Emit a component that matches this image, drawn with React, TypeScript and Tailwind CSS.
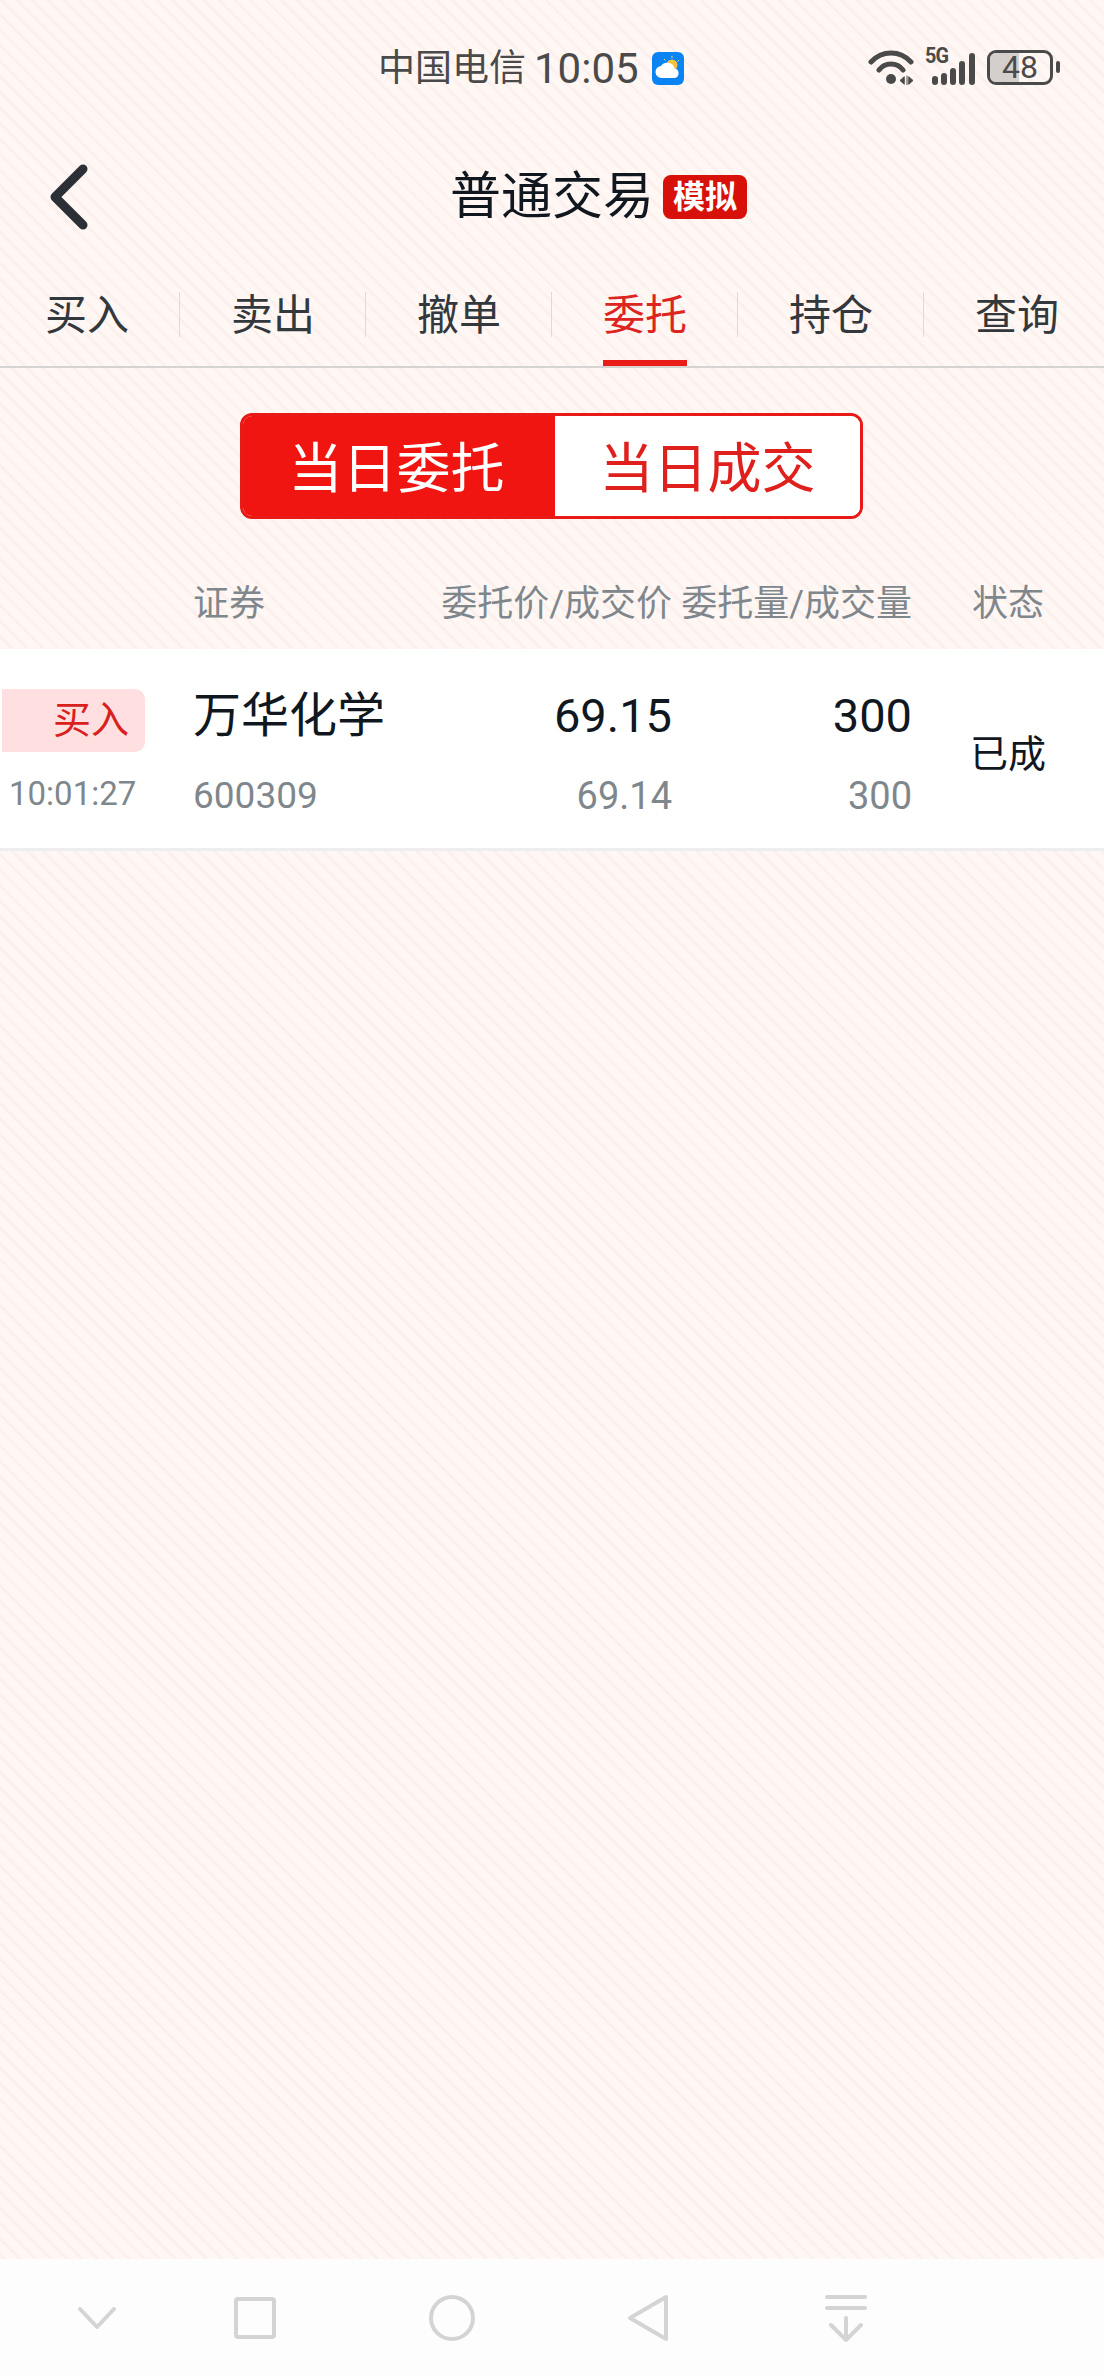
const tabs = ["买入", "卖出", "撤单", "委托", "持仓", "查询"];

const Wifi = () => (
  <svg width="46" height="36" viewBox="0 0 46 36" fill="none" stroke="#4a4a4a" strokeLinecap="round">
    <path d="M3 13C14 1 32 1 43 13" strokeWidth="5" />
    <path d="M11 21C17 13 29 13 35 21" strokeWidth="5" />
    <circle cx="23" cy="30" r="5" fill="#4a4a4a" stroke="none" />
    <path d="M36 28l-4 3.500 4 3.500zM39 27v9M41 28l4 3.500-4 3.500z" fill="#4a4a4a" strokeWidth="1" />
  </svg>
);

const Signal = () => (
  <svg width="50" height="34" viewBox="0 0 50 34" fill="none" stroke="#4a4a4a" strokeWidth="6" strokeLinecap="round">
    <path d="M10 28v3M19 25v6M28 20v11M37 13v18M47 5v26" />
  </svg>
);

const Weather = () => (
  <svg width="32" height="33" viewBox="0 0 32 33">
    <rect width="32" height="33" rx="6" fill="#0b84f3" />
    <circle cx="20" cy="13" r="5.500" fill="#f7c23c" />
    <path d="M20 4v2M27 8l-1.500 1.500M12 7l1.500 1.500" stroke="#f7d97c" strokeWidth="1" />
    <path d="M10 26a6 6 0 0 1-1-12 7.500 7.500 0 0 1 13.500 2.500 4.800 4.800 0 0 1 0 9.500z" fill="#fff" />
  </svg>
);

const Back = () => (
  <svg width="40" height="70" viewBox="0 0 40 70" fill="none" stroke="#2b3036" strokeWidth="9" strokeLinecap="round" strokeLinejoin="round">
    <path d="M33 7 L5 35 L33 63" />
  </svg>
);

export default function App() {
  return (
    <div className="relative h-[2376px] w-[1104px] overflow-hidden flex flex-col bg-[#fff7f4] bg-[repeating-linear-gradient(45deg,#fff7f4_0px,#fff7f4_7px,#fbefec_8.500px,#fbefec_9.500px,#fff7f4_11px)] font-['Roboto','Noto_Sans_CJK_SC',sans-serif]">
      {/* status bar */}
      <div className="h-[134px] shrink-0 flex items-center pl-[378px] pr-[44px] text-[#4a4a4a]">
        <span className="pt-[3px] text-[37px] leading-[40px]">中国电信</span>
        <span className="ml-[8px] pt-[3px] text-[42px] leading-[40px]">10:05</span>
        <span className="ml-[13px] pt-[3px] flex">
          <Weather />
        </span>
        <div className="ml-auto flex items-center">
          <Wifi />
          <div className="relative ml-[11px] w-[50px] h-[36px]">
            <span className="absolute left-0 -top-[5px] text-[22px] leading-[24px] font-bold tracking-[-1px] scale-x-90 origin-left">5G</span>
            <div className="absolute left-0 bottom-0 flex">
              <Signal />
            </div>
          </div>
          <div className="relative ml-[12px] w-[66px] h-[35px] rounded-[9px] border-[3px] border-[#4a4a4a] flex items-center justify-center">
            <div className="absolute left-0 top-0 bottom-0 w-[48%] rounded-l-[6px] bg-[#d4cfcc]" />
            <span className="relative text-[32px] leading-[29px]">48</span>
          </div>
          <div className="ml-[3px] w-[4px] h-[12px] rounded-full bg-[#4a4a4a]" />
        </div>
      </div>

      {/* header */}
      <div className="h-[126px] shrink-0 grid grid-cols-[1fr_auto_1fr] items-center">
        <div className="pl-[50px] flex">
          <Back />
        </div>
        <h1 className="text-[51px] leading-[60px] text-[#10171f]">普通交易</h1>
        <div className="pl-[9px] flex">
          <span className="w-[84px] h-[44px] rounded-[8px] bg-[#d8100a] text-white text-[32px] leading-[44px] font-bold text-center">
            模拟
          </span>
        </div>
      </div>

      {/* tabs */}
      <div className="h-[108px] shrink-0 border-b-2 border-[#d6d4d3]">
        <div className="flex w-[1116px] -ml-[6px] h-full">
          {tabs.map((tab, i) => (
            <div key={tab} className="relative w-[186px] shrink-0 pt-[31px] flex justify-center">
              <span className={i === 3 ? "text-[42px] leading-[50px] text-[#dc2420]" : "text-[42px] leading-[50px] text-[#33383c]"}>
                {tab}
              </span>
              {i < 5 && <div className="absolute right-0 top-[32px] w-px h-[45px] bg-[#dcdada]" />}
              {i === 3 && <div className="absolute left-[51px] bottom-0 w-[84px] h-[6px] bg-[#ea1c17]" />}
            </div>
          ))}
        </div>
      </div>

      {/* segmented control */}
      <div className="mt-[45px] ml-[240px] w-[623px] h-[106px] shrink-0 flex rounded-[12px] border-[3px] border-[#e81a15] overflow-hidden">
        <div className="w-[312px] bg-[#f01510] pt-[9px] pr-[5px] text-white text-[54px] leading-[90px] text-center">当日委托</div>
        <div className="flex-1 bg-white pt-[9px] text-[#e0201c] text-[54px] leading-[90px] text-center">当日成交</div>
      </div>

      {/* table head */}
      <div className="h-[130px] shrink-0 pt-[60px] grid grid-cols-[193px_237px_242px_240px_192px] text-[36px] leading-[50px] text-[#80878c]">
        <div />
        <div>证券</div>
        <div className="text-right whitespace-nowrap">委托价/成交价</div>
        <div className="text-right whitespace-nowrap">委托量/成交量</div>
        <div className="text-center">状态</div>
      </div>

      {/* order row */}
      <div className="h-[202px] shrink-0 bg-white border-b-[3px] border-[#eeeef0] grid grid-cols-[193px_237px_242px_240px_192px]">
        <div className="pt-[40px] pl-[2px]">
          <div className="w-[143px] h-[63px] rounded-r-[10px] bg-[#ffdfe0] text-[38px] leading-[63px] text-[#d8201c] text-right pr-[16px]">
            买入
          </div>
          <div className="mt-[22px] pl-[7px] text-[33px] leading-[40px] text-[#7f878c]">10:01:27</div>
        </div>
        <div className="pt-[39px]">
          <div className="text-[48px] leading-[56px] text-[#10171f]">万华化学</div>
          <div className="mt-[32px] text-[37px] leading-[40px] text-[#80878c]">600309</div>
        </div>
        <div className="pt-[39px] text-right">
          <div className="text-[47px] leading-[56px] text-[#10171f]">69.15</div>
          <div className="mt-[32px] text-[38px] leading-[40px] text-[#80878c]">69.14</div>
        </div>
        <div className="pt-[39px] text-right">
          <div className="text-[47px] leading-[56px] text-[#10171f]">300</div>
          <div className="mt-[32px] text-[38px] leading-[40px] text-[#80878c]">300</div>
        </div>
        <div className="self-center pt-[10px] text-center text-[38px] leading-[44px] text-[#10171f]">已成</div>
      </div>

      {/* nav bar */}
      <div className="mt-auto h-[117px] shrink-0 bg-[#fdfdfd] flex items-center pl-[77px]">
        <svg width="40" height="24" viewBox="0 0 40 24" fill="none" stroke="#d4d4d4" strokeWidth="4" strokeLinecap="round" strokeLinejoin="round">
          <path d="M3 3 L20 21 L37 3" />
        </svg>
        <svg className="ml-[116px]" width="44" height="44" viewBox="0 0 44 44" fill="none" stroke="#d4d4d4" strokeWidth="4" strokeLinejoin="round">
          <rect x="3" y="3" width="38" height="38" rx="2" />
        </svg>
        <svg className="ml-[151px]" width="48" height="48" viewBox="0 0 48 48" fill="none" stroke="#d4d4d4" strokeWidth="4">
          <circle cx="24" cy="24" r="21" />
        </svg>
        <svg className="ml-[151px]" width="42" height="48" viewBox="0 0 42 48" fill="none" stroke="#d4d4d4" strokeWidth="4" strokeLinejoin="round">
          <path d="M39 3 L3 24 L39 45 Z" />
        </svg>
        <svg className="ml-[156px]" width="42" height="48" viewBox="0 0 42 48" fill="none" stroke="#d4d4d4" strokeWidth="4" strokeLinecap="round" strokeLinejoin="round">
          <path d="M2 3H40M2 14H40" />
          <path d="M21 24V46M6 31 L21 46 L36 31" />
        </svg>
      </div>
    </div>
  );
}
